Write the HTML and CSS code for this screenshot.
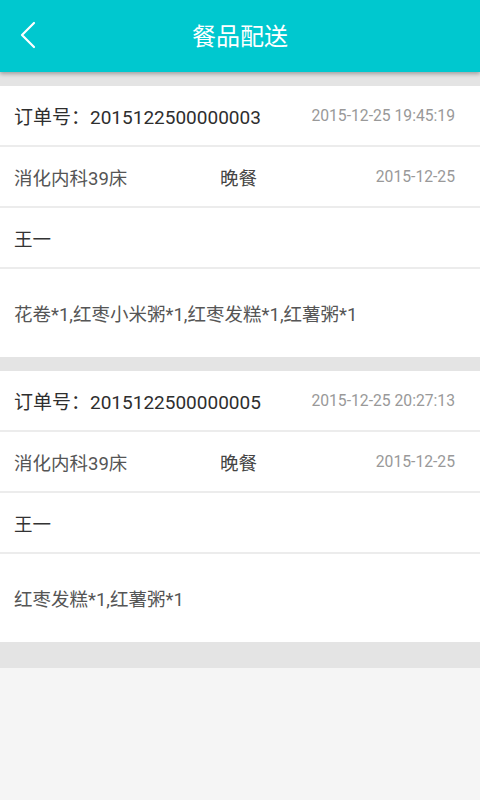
FILE: index.html
```html
<!DOCTYPE html>
<html lang="zh">
<head>
    <meta charset="UTF-8">
    <meta name="viewport" content="width=device-width, initial-scale=1.0">
    <title>餐品配送</title>
    <link rel="stylesheet" href="styles.css">
</head>
<body>
    <header class="topbar">
        <button class="back-button">
            <svg width="16" height="28" viewBox="0 0 16 28"><path d="M14 2 L2 14 L14 26" fill="none" stroke="#fff" stroke-width="2.2" stroke-linecap="round" stroke-linejoin="round"/></svg>
        </button>
        <div class="title">餐品配送</div>
    </header>

    <div class="list">
        <!-- order 1 -->
        <div class="order">
            <div class="row">
                <span class="order-no">订单号：2015122500000003</span>
                <span class="time">2015-12-25 19:45:19</span>
            </div>
            <div class="row">
                <span class="dept">消化内科39床</span>
                <span class="meal">晚餐</span>
                <span class="time">2015-12-25</span>
            </div>
            <div class="row">
                <span class="name">王一</span>
            </div>
            <div class="row food">花卷*1,红枣小米粥*1,红枣发糕*1,红薯粥*1</div>
        </div>

        <!-- order 2 -->
        <div class="order">
            <div class="row">
                <span class="order-no">订单号：2015122500000005</span>
                <span class="time">2015-12-25 20:27:13</span>
            </div>
            <div class="row">
                <span class="dept">消化内科39床</span>
                <span class="meal">晚餐</span>
                <span class="time">2015-12-25</span>
            </div>
            <div class="row">
                <span class="name">王一</span>
            </div>
            <div class="row food">红枣发糕*1,红薯粥*1</div>
        </div>
    </div>
</body>
</html>
```

FILE: styles.css
```css
body {
    margin: 0;
    font-family: Roboto, "Noto Sans CJK SC", sans-serif;
    background: #f5f5f5;
    color: #333;
}

.topbar {
    position: relative;
    height: 72px;
    background: #00c8cf;
    display: flex;
    align-items: center;
    justify-content: center;
    box-sizing: border-box;
    padding-bottom: 4px;
    box-shadow: 0 2px 4px rgba(0, 0, 0, 0.3);
    z-index: 10;
}

.back-button {
    position: absolute;
    left: 20px;
    top: 21px;
    background: none;
    border: none;
    padding: 0;
    width: 16px;
    height: 28px;
}

.title {
    color: #fff;
    font-size: 24px;
}

.list {
    background: #e4e4e4;
    padding: 14px 0 26px;
    display: flex;
    flex-direction: column;
    gap: 14px;
}

.order {
    background: #fff;
}

.row {
    height: 59px;
    border-bottom: 2px solid #ececec;
    display: flex;
    align-items: center;
    justify-content: space-between;
    padding: 0 25px 0 14px;
}

.order-no {
    font-size: 19px;
    color: #2e2e2e;
}

.time {
    font-size: 15.7px;
    color: #999;
}

.dept {
    flex: 1;
    font-size: 18.5px;
    color: #555;
}

.meal {
    flex: none;
    font-size: 18.5px;
    color: #444;
    text-align: center;
    margin-left: 8px;
}

.row .dept + .meal + .time {
    flex: 1;
    text-align: right;
}

.name {
    font-size: 18.5px;
    color: #333;
}

.food {
    height: 88px;
    border-bottom: none;
    font-size: 18.5px;
    color: #555;
    justify-content: flex-start;
}
```
